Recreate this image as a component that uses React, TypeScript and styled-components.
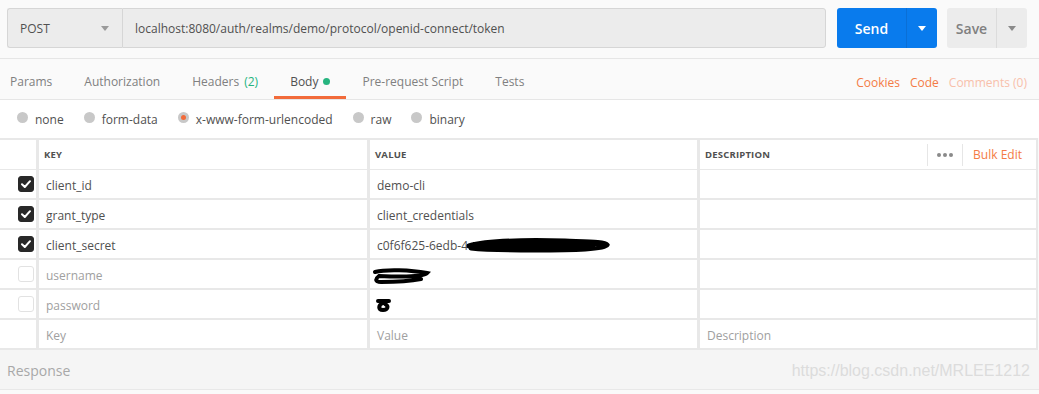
import React from 'react';
import styled, { createGlobalStyle } from 'styled-components';

const GlobalStyle = createGlobalStyle`
  html, body {
    margin: 0;
    padding: 0;
    background: #fafafa;
  }
  body {
    font-family: 'Open Sans', 'Noto Sans', sans-serif;
    font-size: 12px;
    color: #505050;
  }
`;

const Page = styled.div`
  width: 1039px;
  height: 394px;
  background: #fafafa;
  overflow: hidden;
`;

const UrlBar = styled.div`
  display: flex;
  align-items: stretch;
  height: 40px;
  padding: 8px 12px 10px 7px;
  border-bottom: 1px solid #e6e6e6;
`;

const MethodSelect = styled.div`
  width: 115px;
  display: flex;
  align-items: center;
  justify-content: space-between;
  padding: 0 13px 0 12px;
  box-sizing: border-box;
  background: #ececec;
  border: 1px solid #d6d6d6;
  border-right: none;
  border-radius: 3px 0 0 3px;
  font-size: 12px;
  color: #505050;
`;

const Caret = styled.span<{ $color: string }>`
  width: 0;
  height: 0;
  border-left: 4px solid transparent;
  border-right: 4px solid transparent;
  border-top: 5px solid ${(p) => p.$color};
`;

const UrlInput = styled.div`
  flex: 1;
  display: flex;
  align-items: center;
  padding-left: 12px;
  background: #ececec;
  border: 1px solid #d6d6d6;
  border-radius: 0 3px 3px 0;
  font-size: 12px;
  color: #505050;
`;

const SplitButton = styled.div<{ $primary?: boolean; $width: number }>`
  display: flex;
  width: ${(p) => p.$width}px;
  margin-left: ${(p) => (p.$primary ? 11 : 10)}px;
  border-radius: 3px;
  overflow: hidden;
  background: ${(p) => (p.$primary ? '#097bed' : '#ececec')};
  color: ${(p) => (p.$primary ? '#ffffff' : '#808080')};
`;

const ButtonMain = styled.div`
  flex: 1;
  display: flex;
  align-items: center;
  justify-content: center;
  font-size: 14px;
  font-weight: 600;
`;

const ButtonDrop = styled.div<{ $primary?: boolean }>`
  width: 30px;
  display: flex;
  align-items: center;
  justify-content: center;
  border-left: 1px solid ${(p) => (p.$primary ? '#0a6fd6' : '#dcdcdc')};
`;

const TabRow = styled.div`
  display: flex;
  align-items: stretch;
  height: 40px;
  padding-right: 12px;
  border-bottom: 1px solid #e6e6e6;
`;

const Tab = styled.div<{ $active?: boolean }>`
  display: flex;
  align-items: center;
  gap: 5px;
  padding: 8px 16px 0;
  font-size: 12px;
  color: ${(p) => (p.$active ? '#505050' : '#808080')};
  border-bottom: 3px solid ${(p) => (p.$active ? '#f26b3a' : 'transparent')};
  &:first-child {
    padding-left: 10px;
  }
`;

const Count = styled.span`
  color: #26b47f;
`;

const Dot = styled.span`
  width: 7px;
  height: 7px;
  border-radius: 50%;
  background: #26b47f;
`;

const TabLinks = styled.div`
  margin-left: auto;
  display: flex;
  align-items: center;
  gap: 10px;
  padding-top: 6px;
  font-size: 12px;
`;

const TabLink = styled.span<{ $faded?: boolean }>`
  color: ${(p) => (p.$faded ? '#f8c0aa' : '#f47b45')};
`;

const RadioRow = styled.div`
  display: flex;
  align-items: center;
  gap: 20px;
  height: 38px;
  padding-left: 17px;
  background: #ffffff;
`;

const RadioItem = styled.label`
  display: flex;
  align-items: center;
  gap: 7px;
  font-size: 12px;
  color: #505050;
`;

const RadioCircle = styled.span<{ $checked?: boolean }>`
  width: 11px;
  height: 11px;
  margin-top: -3px;
  border-radius: 50%;
  background: #c8c8c8;
  display: flex;
  align-items: center;
  justify-content: center;
  &::after {
    content: '';
    width: 5px;
    height: 5px;
    border-radius: 50%;
    background: ${(p) => (p.$checked ? '#f26b3a' : 'transparent')};
  }
`;

const Table = styled.div`
  display: grid;
  grid-template-columns: 36px 328px 327px 1fr;
  grid-auto-rows: 28px;
  column-gap: 3px;
  row-gap: 2px;
  width: 1038px;
  padding-right: 2px;
  box-sizing: border-box;
  background: #e8e8e8;
  border-top: 2px solid #e8e8e8;
  border-bottom: 2px solid #e8e8e8;
`;

const HeadCell = styled.div`
  height: 29px;
  display: flex;
  align-items: center;
  padding: 0 0 0 5px;
  box-sizing: border-box;
  background: #ffffff;
  font-size: 9.5px;
  font-weight: 700;
  letter-spacing: 0.2px;
  color: #505050;
  &:first-child {
    padding-left: 0;
  }
`;

const HeadTools = styled.div`
  margin-left: auto;
  display: flex;
  align-items: center;
  height: 22px;
`;

const ToolDots = styled.div`
  display: flex;
  gap: 2px;
  height: 22px;
  align-items: center;
  padding: 0 9px;
  border-left: 1px solid #e6e6e6;
  border-right: 1px solid #e6e6e6;
  span {
    width: 4px;
    height: 4px;
    border-radius: 50%;
    background: #8a8a8a;
  }
`;

const BulkEdit = styled.span`
  padding: 0 14px 0 10px;
  font-size: 12px;
  font-weight: 400;
  letter-spacing: 0;
  color: #f47b45;
`;

const Cell = styled.div<{ $placeholder?: boolean }>`
  display: flex;
  align-items: center;
  padding: 3px 0 0 7px;
  box-sizing: border-box;
  background: #ffffff;
  font-size: 12px;
  color: ${(p) => (p.$placeholder ? '#a0a0a0' : '#505050')};
  white-space: nowrap;
`;

const CheckCell = styled.div`
  display: flex;
  align-items: center;
  justify-content: flex-end;
  padding-right: 2px;
  background: #ffffff;
`;

const Checkbox = styled.span<{ $checked?: boolean }>`
  width: 16px;
  height: 16px;
  box-sizing: border-box;
  border-radius: 3px;
  display: flex;
  align-items: center;
  justify-content: center;
  background: ${(p) => (p.$checked ? '#282828' : '#ffffff')};
  border: 1px solid ${(p) => (p.$checked ? '#282828' : '#e2e2e2')};
`;

const Response = styled.div`
  height: 40px;
  display: flex;
  align-items: center;
  justify-content: space-between;
  padding: 2px 9px 0 7px;
  box-sizing: border-box;
  background: #f5f5f5;
  border-bottom: 1px solid #e8e8e8;
`;

const ResponseLabel = styled.span`
  font-size: 14px;
  color: #a8a8a8;
`;

const Watermark = styled.span`
  font-family: 'Liberation Sans', Arial, sans-serif;
  font-size: 16px;
  color: #dcdcdc;
`;

const CheckMark = () => (
  <svg width="10" height="8" viewBox="0 0 10 8">
    <path d="M1 4.2 L3.8 7 L9 1.2" stroke="#ffffff" strokeWidth="2" fill="none" strokeLinecap="round" strokeLinejoin="round" />
  </svg>
);

const Scribble: React.FC<{ kind: 'secret' | 'user' | 'pass' }> = ({ kind }) => {
  if (kind === 'secret') {
    return (
      <svg width="146" height="18" viewBox="0 0 146 18" style={{ marginLeft: -3 }}>
        <path d="M4 9 C20 4 60 3 100 4 C125 5 140 5 142 8 C140 12 110 13 70 13 C40 13 15 12 6 11" stroke="#000" strokeWidth="5" fill="none" strokeLinecap="round" />
        <path d="M8 7 L138 7 M12 10 L130 10" stroke="#000" strokeWidth="4" />
      </svg>
    );
  }
  if (kind === 'user') {
    return (
      <svg width="60" height="18" viewBox="0 0 60 18" style={{ marginLeft: -6 }}>
        <path d="M4 5 C15 2 40 3 56 6 C52 10 30 10 8 9 C4 12 4 15 10 15 C25 15 40 14 50 12" stroke="#000" strokeWidth="4" fill="none" strokeLinecap="round" />
      </svg>
    );
  }
  return (
    <svg width="18" height="16" viewBox="0 0 18 16" style={{ marginLeft: -2 }}>
      <path d="M3 3 L14 3 M8 5 C3 7 3 12 8 12 C13 12 14 8 10 6" stroke="#000" strokeWidth="4" fill="none" strokeLinecap="round" />
    </svg>
  );
};

interface Param {
  key: string;
  value: string;
  checked: boolean;
  scribble?: 'secret' | 'user' | 'pass';
}

const params: Param[] = [
  { key: 'client_id', value: 'demo-cli', checked: true },
  { key: 'grant_type', value: 'client_credentials', checked: true },
  { key: 'client_secret', value: 'c0f6f625-6edb-4', checked: true, scribble: 'secret' },
  { key: 'username', value: '', checked: false, scribble: 'user' },
  { key: 'password', value: '', checked: false, scribble: 'pass' },
];

const tabs = ['Params', 'Authorization', 'Headers', 'Body', 'Pre-request Script', 'Tests'];
const bodyTypes = ['none', 'form-data', 'x-www-form-urlencoded', 'raw', 'binary'];

const App: React.FC = () => {
  return (
    <Page>
      <GlobalStyle />
      <UrlBar>
        <MethodSelect>
          POST
          <Caret $color="#9a9a9a" />
        </MethodSelect>
        <UrlInput>localhost:8080/auth/realms/demo/protocol/openid-connect/token</UrlInput>
        <SplitButton $primary $width={100}>
          <ButtonMain>Send</ButtonMain>
          <ButtonDrop $primary>
            <Caret $color="#ffffff" />
          </ButtonDrop>
        </SplitButton>
        <SplitButton $width={80}>
          <ButtonMain>Save</ButtonMain>
          <ButtonDrop>
            <Caret $color="#8a8a8a" />
          </ButtonDrop>
        </SplitButton>
      </UrlBar>

      <TabRow>
        {tabs.map((t) => (
          <Tab key={t} $active={t === 'Body'}>
            {t}
            {t === 'Headers' && <Count>(2)</Count>}
            {t === 'Body' && <Dot />}
          </Tab>
        ))}
        <TabLinks>
          <TabLink>Cookies</TabLink>
          <TabLink>Code</TabLink>
          <TabLink $faded>Comments (0)</TabLink>
        </TabLinks>
      </TabRow>

      <RadioRow>
        {bodyTypes.map((b) => (
          <RadioItem key={b}>
            <RadioCircle $checked={b === 'x-www-form-urlencoded'} />
            {b}
          </RadioItem>
        ))}
      </RadioRow>

      <Table>
        <HeadCell />
        <HeadCell>KEY</HeadCell>
        <HeadCell>VALUE</HeadCell>
        <HeadCell>
          DESCRIPTION
          <HeadTools>
            <ToolDots>
              <span />
              <span />
              <span />
            </ToolDots>
            <BulkEdit>Bulk Edit</BulkEdit>
          </HeadTools>
        </HeadCell>
        {params.map((p) => (
          <React.Fragment key={p.key}>
            <CheckCell>
              <Checkbox $checked={p.checked}>{p.checked && <CheckMark />}</Checkbox>
            </CheckCell>
            <Cell $placeholder={!p.checked}>{p.key}</Cell>
            <Cell>
              {p.value}
              {p.scribble && <Scribble kind={p.scribble} />}
            </Cell>
            <Cell />
          </React.Fragment>
        ))}
        <CheckCell />
        <Cell $placeholder>Key</Cell>
        <Cell $placeholder>Value</Cell>
        <Cell $placeholder>Description</Cell>
      </Table>

      <Response>
        <ResponseLabel>Response</ResponseLabel>
        <Watermark>https://blog.csdn.net/MRLEE1212</Watermark>
      </Response>
    </Page>
  );
};

export default App;
